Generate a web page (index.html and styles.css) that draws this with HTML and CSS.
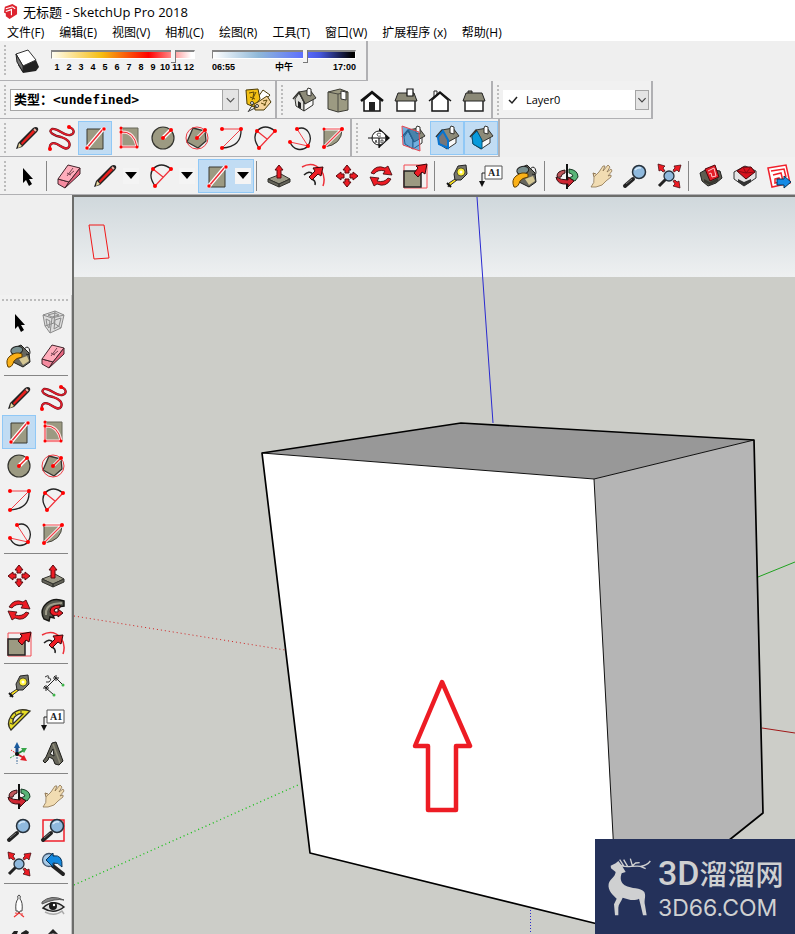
FILE: index.html
```html
<!DOCTYPE html>
<html lang="zh-CN">
<head>
<meta charset="utf-8">
<title>无标题 - SketchUp Pro 2018</title>
<link rel="stylesheet" href="styles.css">
</head>
<body>
<svg class="sprite" aria-hidden="true">
  <defs>
    <g id="house-iso" stroke="#33332f" stroke-width="1" stroke-linejoin="round">
      <path d="M-9 -1L-5 -7L0 2V11L-8 6Z" fill="#dcdcd8"/>
      <path d="M0 3L9 -1V5L0 11Z" fill="#f8f8f8"/><path d="M-5 -8L6 -10L12 -2L1 4Z" fill="#8d8b79"/>
      <path d="M-11 -1L-5 -8L1 4" fill="none" stroke-width="1.500"/>
      <path d="M3 -10V-5L7 -4V-11L4 -12Z" fill="#fff"/>
    </g>
    <g id="lens"><path d="M-2 3L-10 10" stroke="#222" stroke-width="4" stroke-linecap="round"/><path d="M-3 3L-9 8" stroke="#777" stroke-width="1"/><circle cx="4" cy="-4" r="6.500" fill="#8fb9dd" stroke="#26313b" stroke-width="1.500"/><path d="M0 -6Q2 -9 6 -8" stroke="#d5e9f8" stroke-width="1.500" fill="none"/></g>
    <path id="up-head" d="M0 -11L4 -6H2V-3H-2V-6H-4Z" fill="#ed1c24" stroke="#5a0a0f"/>
    <path id="ne-arrow" d="M11 -12L9 -2L6 -4L0 2L-4 -2L2 -8L0 -11Z" fill="#ed1c24" stroke="#3a0508"/>
  </defs>
  <symbol id="i-logo" viewBox="0 0 16 16"><path d="M2 3L10 0L15 3V11L7 16L3 13V10L1 9Z" fill="#dd2530"/><path d="M3 5L10 3L13 5M3 8L9 6V12" fill="none" stroke="#fff" stroke-width="1.200"/></symbol>
  <symbol id="i-shadow" viewBox="-14 -14 28 28"><path d="M-4 4L9 -1L12 6L9 10L-4 12L-9 4Z" fill="#222"/><path d="M-11 -7L1 -11L9 -1L-4 5Z" fill="#fff" stroke="#333" stroke-linejoin="round"/><path d="M-11 -7L-4 5L-4 11L-10 1Z" fill="#777" stroke="#222"/></symbol>
  <symbol id="i-tag" viewBox="-14 -14 28 28"><g stroke="#4b3a05" stroke-linejoin="round"><path d="M5 -10L12 -5L3 5L-2 0Z" fill="#fff"/><path d="M-12 -10L0 -11L2 -1L-4 7L-11 4Z" fill="#f2c014"/><path d="M0 2L9 -4L13 2L6 10L-3 10L-4 4Z" fill="#f6d59b"/></g><path d="M-9 -7L-4 -8L-5 -3M-2 -8L-6 0M-8 -3L-3 -1M5 1L9 0L6 6M3 3L8 5" stroke="#5e4908" fill="none"/><circle cx="-6" cy="3" r="1.500" fill="#fff" stroke="#333"/><circle cx="-1" cy="6" r="1.500" fill="#fff" stroke="#333"/><path d="M-5 4L-10 12M-1 7L-9 11" stroke="#333" fill="none"/></symbol>
  <symbol id="i-iso" viewBox="-14 -14 28 28"><use href="#house-iso"/><path d="M-6 1L-3 3V9L-6 7Z" fill="#222"/></symbol>
  <symbol id="i-top" viewBox="-14 -14 28 28"><path d="M-10 -8L2 -11L10 -8V10L0 12L-10 9Z" fill="#9c9a82" stroke="#3a3a33"/><path d="M0 -6V12M-10 -8L0 -6L10 -8" stroke="#4a4a42" fill="none"/><path d="M3 -9L8 -8V0L3 -1Z" fill="#fff" stroke="#333"/></symbol>
  <symbol id="i-front" viewBox="-14 -14 28 28"><path d="M-8 0V11H8V0L0 -7Z" fill="#fff" stroke="#111" stroke-width="1.500"/><path d="M-11 1L0 -8L11 1" stroke="#111" stroke-width="2.500" fill="none"/><path d="M-3 2H3V11H-3Z" fill="#222"/></symbol>
  <symbol id="i-right" viewBox="-14 -14 28 28"><path d="M-9 -1H9V11H-9Z" fill="#fff" stroke="#222" stroke-width="1.500"/><path d="M-8 -7H8L11 1H-11Z" fill="#8b8977" stroke="#222"/><path d="M1 -11H7V-4H1Z" fill="#fff" stroke="#111" stroke-width="1.200"/></symbol>
  <symbol id="i-back" viewBox="-14 -14 28 28"><path d="M-6 -3V-9H-3V-5" fill="#fff" stroke="#222"/><path d="M-8 0V11H8V0L0 -7Z" fill="#fff" stroke="#111" stroke-width="1.500"/><path d="M-11 1L0 -8L11 1" stroke="#111" stroke-width="1.500" fill="none"/></symbol>
  <symbol id="i-left" viewBox="-14 -14 28 28"><path d="M-9 0H9V11H-9Z" fill="#fff" stroke="#222" stroke-width="1.500"/><path d="M-6 -9H-2V-6H-6Z" fill="#8b8977" stroke="#222"/><path d="M-8 -7H8L11 1H-11Z" fill="#8b8977" stroke="#222"/></symbol>
  <symbol id="i-select" viewBox="-14 -14 28 28"><path d="M-4 -8V7L-1 4L2 10L5 8L2 3H6Z" fill="#000"/></symbol>
  <symbol id="i-component" viewBox="-14 -14 28 28"><g fill="none" stroke="#8b8b8b" stroke-linejoin="round"><path d="M-10 -7L2 -11L11 -7L8 6L-3 11L-8 4Z" fill="#ddd"/><path d="M-10 -7L-1 -4L11 -7M-1 -4L-3 11M-7 -3L-3 -1L-4 6L-6 3ZM2 -2L8 -4L6 4L1 7ZM-5 -7L2 -9L6 -7L-1 -5Z"/><path d="M-8 4L1 1L8 6M1 1L2 -11"/></g></symbol>
  <symbol id="i-paint" viewBox="-14 -14 28 28"><path d="M-7 -7L2 -11L10 -3L11 6L4 11L-6 6Z" fill="#66665e" stroke="#1d1d1a"/><ellipse cx="-1" cy="-6" rx="6" ry="4" transform="rotate(-12)" fill="#79908f" stroke="#222"/><path d="M0 3L8 0L10 5L4 9Z" fill="#d5c793"/><path d="M5 -7Q10 -12 11 -4Q11 0 7 -2" fill="none" stroke="#222"/><path d="M3 -2Q-3 -5 -9 0Q-14 4 -11 11Q-7 12 -5 5Q-3 2 3 1Z" fill="#fbb117" stroke="#634000"/></symbol>
  <symbol id="i-eraser" viewBox="-14 -14 28 28"><g stroke="#42242b" stroke-linejoin="round"><path d="M-11 3L0 6L-4 12L-11 8Z" fill="#f58ba0"/><path d="M-11 3L-1 -11L11 -8L0 6Z" fill="#ffadbb"/><path d="M0 6L11 -8V-2L-4 12Z" fill="#e56680"/></g><path d="M-2 0L4 -8M0 -1L5 -5M-2 -3L2 -1" stroke="#74434f"/></symbol>
  <symbol id="i-pencil" viewBox="-14 -14 28 28"><path d="M-11 11L-9 5L6 -10Q9 -12 11 -10Q12 -8 10 -6L-5 9Z" fill="#222"/><path d="M-6 5L6 -8L8 -6L-5 7Z" fill="#e8201d"/><path d="M-8 5L-5 8L-9 10Z" fill="#ead9a0"/><path d="M7 -9L9 -7" stroke="#f4b3a7" stroke-width="2"/></symbol>
  <symbol id="i-freehand" viewBox="-14 -14 28 28"><path d="M8 -11C14 -9 14 -4 9 -3C3 -2 -3 -10 -9 -9C-14 -6 -6 -2 0 -1C7 1 10 5 8 9C5 13 0 8 -4 6C-9 4 -12 6 -11 11" fill="none" stroke="#5b1118" stroke-width="2.300"/><path d="M8 -11C14 -9 14 -4 9 -3C3 -2 -3 -10 -9 -9C-14 -6 -6 -2 0 -1C7 1 10 5 8 9C5 13 0 8 -4 6C-9 4 -12 6 -11 11" fill="none" stroke="#e11c2a" stroke-width="1.500"/><circle cx="8" cy="-11" r="2" fill="#f00"/><circle cx="-11" cy="11" r="2" fill="#f00"/></symbol>
  <symbol id="i-rect" viewBox="-14 -14 28 28"><path d="M-8 -9H8V11H-8Z" fill="#9c9a82" stroke="#3a3a33"/><path d="M-8 10L8 -9" stroke="#fff" stroke-width="4"/><path d="M-8 10L8 -9" stroke="#ee2b35" stroke-width="1.500"/><circle cx="-8" cy="10" r="2" fill="#f00" stroke="#fff" stroke-width=".5"/><circle cx="9" cy="-9" r="2" fill="#f00" stroke="#fff" stroke-width=".5"/></symbol>
  <symbol id="i-rotrect" viewBox="-14 -14 28 28"><path d="M-7 -10H9V9H-7Z" fill="#9c9a82" stroke="#69685a"/><path d="M-8 -10V9H8M-8 -6Q5 -7 8 9" fill="none" stroke="#ffdede" stroke-width="3"/><path d="M-8 -10V9H8M-8 -6Q5 -7 8 9" fill="none" stroke="#ee2b35"/><g fill="#f00"><circle cx="-8" cy="-10" r="1.500"/><circle cx="-8" cy="-6" r="1.500"/><circle cx="-8" cy="9" r="1.500"/><circle cx="8" cy="9" r="1.500"/></g></symbol>
  <symbol id="i-circle" viewBox="-14 -14 28 28"><circle r="11" fill="#9c9a82" stroke="#33332e" stroke-width="1.200"/><path d="M0 0L8 -8" stroke="#fff" stroke-width="4"/><path d="M0 0L8 -8" stroke="#e22" stroke-width="1.500"/><circle r="2" fill="#f00"/><circle cx="8" cy="-8" r="2" fill="#f00"/></symbol>
  <symbol id="i-polygon" viewBox="-14 -14 28 28"><path d="M-4 -10L8 -7L9 3L1 10L-10 4Z" fill="#9c9a82" stroke="#33332e" stroke-width="1.300"/><circle r="11" fill="none" stroke="#ee3b43"/><path d="M0 0L8 -8" stroke="#fff" stroke-width="3"/><path d="M0 0L8 -8" stroke="#e22" stroke-width="1.500"/><circle r="2" fill="#f00"/><circle cx="8" cy="-8" r="2" fill="#f00"/></symbol>
  <symbol id="i-arc" viewBox="-14 -14 28 28"><path d="M10 -9Q11 9 -9 10" fill="none" stroke="#222" stroke-width="1.300"/><path d="M-9 -9H10L-9 10" fill="none" stroke="#f04048"/><g fill="#f00"><circle cx="-9" cy="-9" r="2"/><circle cx="10" cy="-9" r="2"/><circle cx="-9" cy="10" r="2"/></g></symbol>
  <symbol id="i-arc2" viewBox="-14 -14 28 28"><path d="M-6 10Q-13 0 -8 -7Q0 -15 10 -7" fill="none" stroke="#222" stroke-width="1.300"/><path d="M-6 10L10 -7M-8 -7L2 1" fill="none" stroke="#f02f38" stroke-width="1.200"/><g fill="#f00"><circle cx="-8" cy="-7" r="2"/><circle cx="10" cy="-7" r="2"/><circle cx="-6" cy="10" r="2"/></g></symbol>
  <symbol id="i-arc3" viewBox="-14 -14 28 28"><path d="M-2 -9C8 -13 15 -2 9 8C3 14 -6 12 -9 4" fill="none" stroke="#222" stroke-width="1.300"/><path d="M-2 -9L9 8L-9 4" fill="none" stroke="#f04048"/><g fill="#f00"><circle cx="-2" cy="-9" r="2"/><circle cx="9" cy="8" r="2"/><circle cx="-9" cy="4" r="2"/></g></symbol>
  <symbol id="i-pie" viewBox="-14 -14 28 28"><path d="M-9 -9H9Q9 7 -9 9Z" fill="#9c9a82" stroke="#44443b"/><path d="M-9 9L9 -9H-9" fill="none" stroke="#fff" stroke-width="3"/><path d="M-9 9L9 -9H-9" fill="none" stroke="#f04048" stroke-width="1.200"/><g fill="#f00"><circle cx="-9" cy="-9" r="1.500"/><circle cx="9" cy="-9" r="2"/><circle cx="-9" cy="9" r="2"/></g></symbol>
  <symbol id="i-section" viewBox="-14 -14 28 28"><path d="M0 -10L11 0L0 10Z" fill="#111"/><circle r="7" fill="#fff" stroke="#111"/><path d="M-11 0H10M0 0V10" stroke="#111" stroke-width="1.200"/><path d="M2 -4Q-2 -6 -2 -3Q-1 -1 2 -2M-4 5L-3 2L-2 5M2 2V5H4V2H2" fill="none" stroke="#333" stroke-width=".8"/></symbol>
  <symbol id="i-secplane" viewBox="-14 -14 28 28"><use href="#house-iso"/><path d="M-11 -12L6 -6L7 13L-10 7Z" fill="#1a7ecf" fill-opacity=".6" stroke="#eb4751"/></symbol>
  <symbol id="i-seccut" viewBox="-14 -14 28 28"><use href="#house-iso"/><path d="M-9 -1L-4 -7L1 2V10L-8 6Z" fill="#77777a" stroke="#0875d1" stroke-width="2"/></symbol>
  <symbol id="i-secfill" viewBox="-14 -14 28 28"><use href="#house-iso"/><path d="M-9 -2L-4 -7L1 2V11L-8 6Z" fill="#089bdc" stroke="#04547a"/></symbol>
  <symbol id="i-push" viewBox="-14 -14 28 28"><path d="M-11 3L2 -2L11 3L0 8Z" fill="#9a9885" stroke="#33332e"/><path d="M-11 3L0 8V11L-11 6ZM0 8L11 3V6L0 11Z" fill="#65645a" stroke="#33332e"/><path d="M0 -11L4 -6H2V2H-2V-6H-4Z" fill="#ed1c24" stroke="#5a0a0f"/></symbol>
  <symbol id="i-offset" viewBox="-14 -14 28 28"><path d="M-11 -9Q0 -15 8 -6Q13 1 10 10" fill="none" stroke="#ee3039" stroke-width="1.500"/><path d="M-9 -1Q-4 -6 0 -2M-2 3Q3 4 2 9" fill="none" stroke="#222" stroke-width="1.500"/><path d="M10 -9L8 0L5 -2L-1 4L-4 1L2 -5L0 -8Z" fill="#ed1c24" stroke="#3a0508"/></symbol>
  <symbol id="i-move" viewBox="-14 -14 28 28"><use href="#up-head"/><use href="#up-head" transform="rotate(90)"/><use href="#up-head" transform="rotate(180)"/><use href="#up-head" transform="rotate(270)"/></symbol>
  <symbol id="i-rotate" viewBox="-14 -14 28 28"><path id="rot-half" d="M-10 -3Q-5 -12 4 -8L7 -10L11 -1L2 -2L4 -5Q-3 -7 -7 -2Z" fill="#ed1c24" stroke="#3a0508" stroke-width=".8"/><use href="#rot-half" transform="rotate(180)"/></symbol>
  <symbol id="i-scale" viewBox="-14 -14 28 28"><path d="M-11 -11H12V12H-11Z" fill="none" stroke="#f34b53"/><path d="M-11 -5H6V11H-11Z" fill="#9c9a82" stroke="#222" stroke-width="1.500"/><path d="M12 -12L10 -2L7 -4L3 1L-1 -3L3 -8L1 -10Z" fill="#ed1c24" stroke="#3a0508"/></symbol>
  <symbol id="i-follow" viewBox="-14 -14 28 28"><path d="M11 -9Q1 -13 -6 -7Q-14 0 -9 9L-4 11L-3 7L1 8Q-2 0 4 -3L11 -4Z" fill="#56564c" stroke="#171714" stroke-width="1.500"/><path d="M-7 5Q-8 -4 1 -6L9 -7" fill="none" stroke="#9d9b89" stroke-width="2"/><path d="M7 -5Q-3 -5 -3 2Q-1 7 5 5V7L10 3L5 -1V2Q1 3 1 0Q2 -2 7 -2Z" fill="#ed1c24" stroke="#3a0508"/></symbol>
  <symbol id="i-tape" viewBox="-14 -14 28 28"><path d="M0 4L-9 11L-8 7L-2 3" fill="#ffe51a" stroke="#333"/><path d="M-3 -2L1 -10L9 -11L10 -2L4 4L-2 4Z" fill="#77776f" stroke="#222"/><circle cx="4" cy="-4" r="4" fill="#fff13a" stroke="#222" stroke-width=".7"/><path d="M-10 7L-6 11" stroke="#111" stroke-width="2"/><circle cx="4" cy="-4" r="1.500" fill="#fff"/></symbol>
  <symbol id="i-text" viewBox="-14 -14 28 28"><path d="M-6 -10H11V3H-6Z" fill="#fff" stroke="#555"/><text x="-3" y="0" class="glyph">A1</text><path d="M-6 -3H-9V6" fill="none" stroke="#222"/><path d="M-12 5H-6L-9 11Z" fill="#111"/></symbol>
  <symbol id="i-dim" viewBox="-14 -14 28 28"><path d="M-7 2L3 -8M-7 2L1 9M3 -8L10 -1M-10 2H-4M-7 -1V5M-9 0L-5 4M0 -8H6M3 -11V-5M1 -10L5 -6" stroke="#222" fill="none"/><path d="M-8 -9Q-3 -12 -5 -8Q0 -8 -4 -4L-7 -4" stroke="#333" fill="none"/><circle cx="1" cy="9" r="1.500" fill="#3eb54a"/><circle cx="10" cy="-1" r="1.500" fill="#3eb54a"/></symbol>
  <symbol id="i-protractor" viewBox="-14 -14 28 28"><path d="M-8 10L11 -9Q-2 -13 -8 -4Q-13 4 -8 10ZM-6 4Q-7 -2 -2 -5Q1 -7 4 -6Z" fill="#e7dc25" fill-rule="evenodd" stroke="#333122" stroke-width="1.300"/><path d="M-9 3L-7 4M-8 -2L-6 -1M-4 -7L-3 -5M2 -9L2 -7" stroke="#333"/></symbol>
  <symbol id="i-axes" viewBox="-14 -14 28 28"><path d="M-2 0V-7" stroke="#1a4b84" stroke-width="3"/><path d="M-5 -6L-2 -12L1 -6Z" fill="#1a5b9e"/><path d="M-2 0L5 -4" stroke="#278a38" stroke-width="2"/><path d="M2 -6L8 -6L5 -1Z" fill="#38a64a"/><path d="M-2 0L5 4" stroke="#d31f27" stroke-width="2"/><path d="M5 1L8 7L1 6Z" fill="#e11c25"/><path d="M-2 0V10" stroke="#45719d" stroke-dasharray="2 1"/><path d="M-2 0L-8 -4" stroke="#e33" stroke-dasharray="2 1"/><path d="M-2 0L-9 4" stroke="#3a4" stroke-dasharray="2 1"/><circle cx="-2" cy="0" r="2" fill="#111"/></symbol>
  <symbol id="i-text3d" viewBox="-14 -14 28 28"><path d="M-7 3L-1 -11L3 -12L10 7L6 11L2 10L0 5L-4 3L-5 6L-8 9L-10 7ZM-3 0L1 2L0 -5Z" fill="#66655a" stroke="#1d1d19" fill-rule="evenodd"/><path d="M0 -10L7 9" fill="none" stroke="#8f8d7a" stroke-width="1.500"/></symbol>
  <symbol id="i-orbit" viewBox="-14 -14 28 28"><path d="M0 -12V13" stroke="#111" stroke-width="2"/><path d="M-2 -6Q-10 -5 -10 0Q-9 2 -6 1Q-6 -2 -2 -3Z" fill="#bf5459" stroke="#381214"/><path d="M2 -7Q11 -6 11 1L8 5L2 2L6 0Q5 -3 2 -3Z" fill="#59b477" stroke="#173b24"/><path d="M-11 1Q-10 9 1 8V11L7 5L1 1V4Q-6 4 -11 1Z" fill="#cf2632" stroke="#330c0f"/></symbol>
  <symbol id="i-hand" viewBox="-14 -14 28 28"><path d="M-10 11Q-6 7 -7 1L-2 -4L2 -10L4 -10L2 -5L7 -11L9 -9L6 -4L10 -7L11 -5L7 0L10 -1L10 1L5 5Q2 10 -5 11Z" fill="#f1dcb2" stroke="#8c7350" stroke-width=".8" stroke-linejoin="round"/><path d="M-7 1L-8 -3L-5 -2" fill="#f1dcb2" stroke="#8c7350"/></symbol>
  <symbol id="i-zoom" viewBox="-14 -14 28 28"><use href="#lens"/></symbol>
  <symbol id="i-zoomwin" viewBox="-14 -14 28 28"><path d="M-10 -10H11V11H-10Z" fill="none" stroke="#f0212b" stroke-width="1.500"/><use href="#lens"/></symbol>
  <symbol id="i-zoomext" viewBox="-14 -14 28 28"><path d="M-3 3L-10 10" stroke="#222" stroke-width="3"/><circle r="5" fill="#8fb9dd" stroke="#26313b" stroke-width="1.300"/><g fill="#ed1c24" stroke="#3a0508" stroke-width=".7"><path id="ne-small" d="M12 -11L10 -4L8 -6L5 -4L4 -6L6 -8L5 -10Z"/><use href="#ne-small" transform="rotate(90)"/><use href="#ne-small" transform="rotate(270)"/></g></symbol>
  <symbol id="i-prev" viewBox="-14 -14 28 28"><circle cx="-4" cy="-4" r="6.500" fill="#a6c9e6" stroke="#40546b" stroke-width="1.300"/><path d="M0 2L10 10" stroke="#222" stroke-width="4" stroke-linecap="round"/><path d="M-7 -4L0 -11V-8Q10 -10 9 3Q5 -2 0 -1V3Z" fill="#1288df" stroke="#0c365a"/></symbol>
  <symbol id="i-position" viewBox="-14 -14 28 28"><path d="M0 -11Q2 -11 1 -7Q4 -4 3 5L1 5L0 8L-1 5H-3Q-4 -4 -1 -7Q-2 -11 0 -11Z" fill="#fff" stroke="#444"/><path d="M-5 11L0 7L5 11M-4 7L4 8" fill="none" stroke="#e33" stroke-width="1.200"/></symbol>
  <symbol id="i-look" viewBox="-14 -14 28 28"><path d="M-11 -4Q-2 -12 11 -6Q2 -8 -11 -2Z" fill="#888" stroke="#555"/><path d="M-10 2Q0 -8 11 1Q1 9 -10 2Z" fill="#ddd" stroke="#222" stroke-width="1.500"/><circle cx="0" cy="0" r="4" fill="#1a1a1a"/><circle cx="1" cy="-1" r="1.200" fill="#fff"/><path d="M-8 6Q2 11 9 5L11 8" fill="none" stroke="#aaa" stroke-width="1.500"/></symbol>
  <symbol id="i-walk" viewBox="-14 -14 28 28"><path d="M-9 -4L-5 -9L-1 -9L-3 -3L-8 3ZM2 -7L7 -10L10 -8L8 -3L3 2Z" fill="#222"/></symbol>
  <symbol id="i-sectool" viewBox="-14 -14 28 28"><path d="M-9 -2L0 -11L9 -2Z" fill="#222"/><circle r="7" fill="#fff" stroke="#222"/></symbol>
  <symbol id="i-warehouse" viewBox="-14 -14 28 28"><path d="M-11 -3L-4 -7L9 -5L11 2L5 7L-3 10L-9 5Z" fill="#5d5d51" stroke="#222"/><path d="M-6 -7L4 -11L8 1L-1 5Z" fill="#e31c27" stroke="#4c080d"/><path d="M-3 -5L3 -8L5 0L1 1L0 -3L-2 -2" fill="none" stroke="#ffc9cc"/><path d="M-7 3L-1 6L7 2V5L-1 9L-7 6Z" fill="#373730"/></symbol>
  <symbol id="i-extension" viewBox="-14 -14 28 28"><path d="M-11 -4L0 -10L11 -5L11 2L-1 10L-11 3Z" fill="#e4e4e4" stroke="#333"/><path d="M-8 -5L-2 -9L6 -9L10 -4L1 3Z" fill="#d8121d" stroke="#46050a"/><path d="M-8 -5L1 -3L10 -4M-2 -9L1 -3L6 -9" fill="none" stroke="#8c0b13"/><path d="M-7 3L-1 6L6 3V6L-1 10L-7 6Z" fill="#333"/></symbol>
  <symbol id="i-layout" viewBox="-14 -14 28 28"><path d="M-11 -8L7 -11L11 7L-7 11Z" fill="#fff" stroke="#f0202b" stroke-width="1.500"/><path d="M-8 -5L5 -7L7 1M-6 -1L2 -3L4 5M-4 3L0 2L1 6L-4 7Z" fill="none" stroke="#f0202b" stroke-width="1.500"/><path d="M-2 3H5V0L12 6L5 12V9H-2Z" fill="#158be6" stroke="#073459"/></symbol>
</svg>

<header class="window-head">
  <h1 class="title"><svg class="title-logo" aria-hidden="true"><use href="#i-logo"/></svg>无标题 - SketchUp Pro 2018</h1>
  <nav class="menu">
    <a href="#">文件(F)</a><a href="#">编辑(E)</a><a href="#">视图(V)</a><a href="#">相机(C)</a><a href="#">绘图(R)</a><a href="#">工具(T)</a><a href="#">窗口(W)</a><a href="#">扩展程序 (x)</a><a href="#">帮助(H)</a>
  </nav>
</header>

<div class="toolbars">
  <div class="row row-first">
    <div class="bar">
      <i class="grip"></i>
      <button class="tool" aria-label="阴影"><svg class="icon"><use href="#i-shadow"/></svg></button>
      <div class="slider">
        <input class="range range-date" type="range" min="0" max="100" value="87" aria-label="日期">
        <div class="months"><span>1</span><span>2</span><span>3</span><span>4</span><span>5</span><span>6</span><span>7</span><span>8</span><span>9</span><span>10</span><span>11</span><span>12</span></div>
      </div>
      <div class="slider">
        <input class="range range-time" type="range" min="0" max="100" value="66" aria-label="时间">
        <div class="times"><span>06:55</span><span>中午</span><span>17:00</span></div>
      </div>
    </div>
  </div>

  <div class="row">
    <div class="bar">
      <i class="grip"></i>
      <div class="combo combo-type">
        <select aria-label="类型"><option>类型：&lt;undefined&gt;</option></select>
        <svg class="chevron" viewBox="0 0 16 20" aria-hidden="true"><path d="M4 8L8 12L12 8" fill="none" stroke="#555" stroke-width="1.300"/></svg>
      </div>
      <button class="tool" aria-label="标签"><svg class="icon"><use href="#i-tag"/></svg></button>
    </div>
    <div class="bar">
      <i class="grip"></i>
      <button class="tool" aria-label="等轴"><svg class="icon"><use href="#i-iso"/></svg></button>
      <button class="tool" aria-label="俯视"><svg class="icon"><use href="#i-top"/></svg></button>
      <button class="tool" aria-label="前视"><svg class="icon"><use href="#i-front"/></svg></button>
      <button class="tool" aria-label="右视"><svg class="icon"><use href="#i-right"/></svg></button>
      <button class="tool" aria-label="后视"><svg class="icon"><use href="#i-back"/></svg></button>
      <button class="tool" aria-label="左视"><svg class="icon"><use href="#i-left"/></svg></button>
    </div>
    <div class="bar">
      <i class="grip"></i>
      <div class="combo combo-layer">
        <svg class="check" viewBox="0 0 10 10" aria-hidden="true"><path d="M1 5L4 8L9 2" fill="none" stroke="#222" stroke-width="1.500"/></svg>
        <select aria-label="图层"><option>Layer0</option></select>
        <svg class="chevron" viewBox="0 0 12 20" aria-hidden="true"><path d="M2 8L6 12L10 8" fill="none" stroke="#444" stroke-width="1.300"/></svg>
      </div>
    </div>
  </div>

  <div class="row">
    <div class="bar">
      <i class="grip"></i>
      <button class="tool" aria-label="直线"><svg class="icon"><use href="#i-pencil"/></svg></button>
      <button class="tool" aria-label="手绘线"><svg class="icon"><use href="#i-freehand"/></svg></button>
      <button class="tool active" aria-label="矩形"><svg class="icon"><use href="#i-rect"/></svg></button>
      <button class="tool" aria-label="旋转长方形"><svg class="icon"><use href="#i-rotrect"/></svg></button>
      <button class="tool" aria-label="圆"><svg class="icon"><use href="#i-circle"/></svg></button>
      <button class="tool" aria-label="多边形"><svg class="icon"><use href="#i-polygon"/></svg></button>
      <button class="tool" aria-label="圆弧"><svg class="icon"><use href="#i-arc"/></svg></button>
      <button class="tool" aria-label="两点圆弧"><svg class="icon"><use href="#i-arc2"/></svg></button>
      <button class="tool" aria-label="三点圆弧"><svg class="icon"><use href="#i-arc3"/></svg></button>
      <button class="tool" aria-label="扇形"><svg class="icon"><use href="#i-pie"/></svg></button>
    </div>
    <div class="bar">
      <i class="grip"></i>
      <button class="tool" aria-label="剖切面"><svg class="icon"><use href="#i-section"/></svg></button>
      <button class="tool" aria-label="显示剖切面"><svg class="icon"><use href="#i-secplane"/></svg></button>
      <button class="tool active" aria-label="显示剖面切割"><svg class="icon"><use href="#i-seccut"/></svg></button>
      <button class="tool active" aria-label="显示剖面填充"><svg class="icon"><use href="#i-secfill"/></svg></button>
    </div>
  </div>

  <div class="row row-last">
    <div class="bar">
      <i class="grip"></i>
      <button class="tool" aria-label="选择"><svg class="icon"><use href="#i-select"/></svg></button>
      <i class="sep"></i>
      <button class="tool" aria-label="擦除"><svg class="icon"><use href="#i-eraser"/></svg></button>
      <button class="tool split" aria-label="直线"><svg class="icon"><use href="#i-pencil"/></svg><span class="drop"></span></button>
      <button class="tool split" aria-label="圆弧"><svg class="icon"><use href="#i-arc2"/></svg><span class="drop"></span></button>
      <button class="tool split active" aria-label="矩形"><svg class="icon"><use href="#i-rect"/></svg><span class="drop"></span></button>
      <i class="sep"></i>
      <button class="tool" aria-label="推拉"><svg class="icon"><use href="#i-push"/></svg></button>
      <button class="tool" aria-label="偏移"><svg class="icon"><use href="#i-offset"/></svg></button>
      <button class="tool" aria-label="移动"><svg class="icon"><use href="#i-move"/></svg></button>
      <button class="tool" aria-label="旋转"><svg class="icon"><use href="#i-rotate"/></svg></button>
      <button class="tool" aria-label="缩放"><svg class="icon"><use href="#i-scale"/></svg></button>
      <i class="sep"></i>
      <button class="tool" aria-label="卷尺"><svg class="icon"><use href="#i-tape"/></svg></button>
      <button class="tool" aria-label="文字"><svg class="icon"><use href="#i-text"/></svg></button>
      <button class="tool" aria-label="材质"><svg class="icon"><use href="#i-paint"/></svg></button>
      <i class="sep"></i>
      <button class="tool" aria-label="环绕观察"><svg class="icon"><use href="#i-orbit"/></svg></button>
      <button class="tool" aria-label="平移"><svg class="icon"><use href="#i-hand"/></svg></button>
      <button class="tool" aria-label="视图缩放"><svg class="icon"><use href="#i-zoom"/></svg></button>
      <button class="tool" aria-label="充满视窗"><svg class="icon"><use href="#i-zoomext"/></svg></button>
      <i class="sep"></i>
      <button class="tool" aria-label="模型库"><svg class="icon"><use href="#i-warehouse"/></svg></button>
      <button class="tool" aria-label="扩展程序库"><svg class="icon"><use href="#i-extension"/></svg></button>
      <button class="tool" aria-label="布局"><svg class="icon"><use href="#i-layout"/></svg></button>
    </div>
  </div>
</div>

<main class="work">
  <aside class="side">
    <div class="palette">
      <i class="grip-h"></i>
      <div class="group">
        <button class="tool" aria-label="选择"><svg class="icon"><use href="#i-select"/></svg></button>
        <button class="tool" aria-label="制作组件"><svg class="icon"><use href="#i-component"/></svg></button>
        <button class="tool" aria-label="材质"><svg class="icon"><use href="#i-paint"/></svg></button>
        <button class="tool" aria-label="擦除"><svg class="icon"><use href="#i-eraser"/></svg></button>
      </div>
      <div class="group">
        <button class="tool" aria-label="直线"><svg class="icon"><use href="#i-pencil"/></svg></button>
        <button class="tool" aria-label="手绘线"><svg class="icon"><use href="#i-freehand"/></svg></button>
        <button class="tool active" aria-label="矩形"><svg class="icon"><use href="#i-rect"/></svg></button>
        <button class="tool" aria-label="旋转长方形"><svg class="icon"><use href="#i-rotrect"/></svg></button>
        <button class="tool" aria-label="圆"><svg class="icon"><use href="#i-circle"/></svg></button>
        <button class="tool" aria-label="多边形"><svg class="icon"><use href="#i-polygon"/></svg></button>
        <button class="tool" aria-label="圆弧"><svg class="icon"><use href="#i-arc"/></svg></button>
        <button class="tool" aria-label="两点圆弧"><svg class="icon"><use href="#i-arc2"/></svg></button>
        <button class="tool" aria-label="三点圆弧"><svg class="icon"><use href="#i-arc3"/></svg></button>
        <button class="tool" aria-label="扇形"><svg class="icon"><use href="#i-pie"/></svg></button>
      </div>
      <div class="group">
        <button class="tool" aria-label="移动"><svg class="icon"><use href="#i-move"/></svg></button>
        <button class="tool" aria-label="推拉"><svg class="icon"><use href="#i-push"/></svg></button>
        <button class="tool" aria-label="旋转"><svg class="icon"><use href="#i-rotate"/></svg></button>
        <button class="tool" aria-label="路径跟随"><svg class="icon"><use href="#i-follow"/></svg></button>
        <button class="tool" aria-label="缩放"><svg class="icon"><use href="#i-scale"/></svg></button>
        <button class="tool" aria-label="偏移"><svg class="icon"><use href="#i-offset"/></svg></button>
      </div>
      <div class="group">
        <button class="tool" aria-label="卷尺"><svg class="icon"><use href="#i-tape"/></svg></button>
        <button class="tool" aria-label="尺寸"><svg class="icon"><use href="#i-dim"/></svg></button>
        <button class="tool" aria-label="量角器"><svg class="icon"><use href="#i-protractor"/></svg></button>
        <button class="tool" aria-label="文字"><svg class="icon"><use href="#i-text"/></svg></button>
        <button class="tool" aria-label="轴"><svg class="icon"><use href="#i-axes"/></svg></button>
        <button class="tool" aria-label="三维文字"><svg class="icon"><use href="#i-text3d"/></svg></button>
      </div>
      <div class="group">
        <button class="tool" aria-label="环绕观察"><svg class="icon"><use href="#i-orbit"/></svg></button>
        <button class="tool" aria-label="平移"><svg class="icon"><use href="#i-hand"/></svg></button>
        <button class="tool" aria-label="视图缩放"><svg class="icon"><use href="#i-zoom"/></svg></button>
        <button class="tool" aria-label="缩放窗口"><svg class="icon"><use href="#i-zoomwin"/></svg></button>
        <button class="tool" aria-label="充满视窗"><svg class="icon"><use href="#i-zoomext"/></svg></button>
        <button class="tool" aria-label="上一个"><svg class="icon"><use href="#i-prev"/></svg></button>
      </div>
      <div class="group">
        <button class="tool" aria-label="定位相机"><svg class="icon"><use href="#i-position"/></svg></button>
        <button class="tool" aria-label="绕轴旋转"><svg class="icon"><use href="#i-look"/></svg></button>
        <button class="tool" aria-label="漫游"><svg class="icon"><use href="#i-walk"/></svg></button>
        <button class="tool" aria-label="剖切面"><svg class="icon"><use href="#i-sectool"/></svg></button>
      </div>
    </div>
  </aside>

  <section class="viewport">
    <svg class="scene" role="img" aria-label="立方体模型">
      <g transform="translate(-74 -197)" stroke-linejoin="round">
        <path d="M477 197L493 423" stroke="#2a2ad0"/>
        <path d="M758 577L795 562L1200 398" stroke="#1fa21f" fill="none"/>
        <path d="M762 728L795 733L1200 794" stroke="#a01818" fill="none"/>
        <path d="M74 616L285 650" stroke="#d02020" stroke-dasharray="1 3"/>
        <path d="M74 885L298 785" stroke="#10c010" stroke-width="1.300" stroke-dasharray="1 3"/>
        <path d="M530.500 907V940" stroke="#2a2ad0" stroke-dasharray="1 2"/>
        <path d="M262 453L461 423L754 440L594 479Z" fill="#989898"/>
        <path d="M262 453L594 479L618 929L310 853Z" fill="#fff"/>
        <path d="M594 479L754 440L763 813L618 929Z" fill="#b5b5b5"/>
        <path d="M262 453L594 479L754 440M594 479L618 929" fill="none" stroke="#111"/>
        <path d="M262 453L461 423L754 440L763 813L618 929L310 853Z" fill="none" stroke="#000" stroke-width="1.700"/>
        <path d="M89 225H104L109 258L94 259Z" fill="none" stroke="#f01818"/>
        <path d="M442 682L470 746H456V810H428V746H415Z" fill="none" stroke="#ed1c24" stroke-width="4.500"/>
      </g>
    </svg>
    <div class="brand">
      <svg class="deer" viewBox="50 80 135 180" aria-hidden="true"><path d="M61 106L76 99L84 92L94 105L106 125L94 129C89 142 90 156 103 165C125 177 150 171 162 185C168 200 160 207 164 225L169 255H158L151 225L146 205C130 214 112 206 97 202C93 213 84 222 84 232V255H74L71 222L79 205C70 195 51 181 55 160C59 146 74 141 76 125L62 114Z" fill="#cfd0d1"/><path d="M90 103C99 116 130 104 150 108Q170 106 180 92M101 108L88 88M112 108L100 88M126 106L120 85M126 106L136 98L148 97M150 108L166 115" fill="none" stroke="#cfd0d1" stroke-width="4"/></svg>
      <div class="brand-text"><strong><span class="brand-3d">3D</span>溜溜网</strong><span class="brand-url">3D66.COM</span></div>
    </div>
  </section>
</main>
</body>
</html>
```
FILE: styles.css
```css
* { box-sizing: border-box; }

body {
  margin: 0;
  height: 100vh;
  overflow: hidden;
  display: flex;
  flex-direction: column;
  background: #efefef;
  color: #000;
  font-family: "Open Sans", "Noto Sans CJK SC", sans-serif;
  font-size: 12px;
}

.sprite { position: absolute; width: 0; height: 0; }
.glyph { font: bold 10px "Liberation Serif", serif; fill: #222; }

.window-head { background: #fff; }

.title {
  display: flex;
  align-items: center;
  gap: 5px;
  height: 23px;
  margin: 0;
  padding-left: 3px;
  font-size: 13px;
  line-height: 20px;
  font-weight: 400;
}
.title-logo { width: 15px; height: 15px; }

.menu {
  display: flex;
  gap: 15px;
  height: 18px;
  padding-left: 7px;
  line-height: 20px;
  white-space: nowrap;
}
.menu a { color: inherit; text-decoration: none; }

.toolbars { flex: none; }

.row { display: flex; height: 38px; }
.row-first { height: 40px; }

.bar {
  display: flex;
  flex: none;
  align-items: center;
  background: #f1f1f1;
  border: solid #b0b0b3;
  border-width: 0 2px 1px 0;
}
.row-last .bar { flex: 1 0 auto; border-right: 0; }

.grip {
  align-self: stretch;
  width: 2px;
  margin: 4px 4px 3px;
  background: repeating-linear-gradient(#bcbcbc 0 2px, transparent 2px 4px);
}

.tool {
  display: flex;
  flex: none;
  align-items: center;
  justify-content: center;
  width: 34px;
  height: 34px;
  padding: 0;
  border: 1px solid transparent;
  background: none;
}
.tool.active { background: #c1dcf3; border-color: #90c8f6; }
.icon { flex: none; width: 28px; height: 28px; }

.split {
  justify-content: flex-start;
  gap: 4px;
  width: 56px;
  padding-left: 4px;
}
.drop {
  display: flex;
  align-items: center;
  justify-content: center;
  width: 16px;
  height: 16px;
  background: #f4f4f4;
}
.drop::before {
  content: "";
  border: solid transparent;
  border-width: 7px 6px 0;
  border-top-color: #000;
}

.sep {
  width: 1px;
  height: 30px;
  margin: 0 5px 0 2px;
  background: #858585;
}

.slider { width: 144px; margin: 0 10px 0 7px; }
.range {
  display: block;
  appearance: none;
  width: 100%;
  height: 13px;
  margin: 0;
  background: none;
}
.range::-webkit-slider-runnable-track {
  height: 9px;
  border: solid;
  border-width: 2px 1px 1px;
  border-color: #858585 #fff #fff #858585;
}
.range-date::-webkit-slider-runnable-track { background: linear-gradient(90deg, #fffdf0, #f5bd12 35%, #f00 68%, #fff 98%); }
.range-time::-webkit-slider-runnable-track { background: linear-gradient(90deg, #fff, #8fb8d8 32%, #5a6cff 65%, #4658e0 75%, #000 98%); }
.range::-webkit-slider-thumb {
  appearance: none;
  width: 5px;
  height: 13px;
  margin-top: -2px;
  background: #f4f4f4;
  border: solid;
  border-width: 0 1px 1px 0;
  border-color: #777;
}
.months, .times { font: bold 9px/12px "Liberation Sans", "Noto Sans CJK SC", sans-serif; }
.months { display: grid; grid-template-columns: repeat(12, 1fr); text-align: center; }
.times { display: flex; justify-content: space-between; }

.combo { position: relative; background: #fff; }
.combo select {
  appearance: none;
  display: block;
  width: 100%;
  height: 100%;
  padding: 0 20px 0 3px;
  border: 0;
  border-radius: 0;
  background: none;
  color: #000;
}
.combo-type { width: 229px; height: 22px; margin-right: 2px; border: 1px solid #a5a5a5; }
.combo-type select { font: bold 13px "DejaVu Sans Mono", "Noto Sans CJK SC", monospace; }
.combo-layer { display: flex; align-items: center; width: 146px; height: 20px; margin-right: 2px; padding-left: 5px; }
.combo-layer select { padding-left: 8px; font: 11px "Open Sans", sans-serif; }
.check { flex: none; width: 10px; height: 10px; }
.chevron {
  position: absolute;
  top: 0;
  right: 0;
  width: 16px;
  height: 100%;
  background: #e4e4e4;
  border: solid #a5a5a5;
  border-width: 0 0 0 1px;
  pointer-events: none;
}
.combo-layer .chevron { width: 14px; border-width: 1px; }

.work { display: flex; flex: 1; min-height: 0; }

.side { flex: none; width: 72px; padding-top: 100px; overflow: hidden; }
.palette {
  min-height: 100%;
  padding-top: 4px;
  background: #f1f1f1;
  border-right: 1px solid #c4c4c4;
}
.grip-h {
  display: block;
  height: 2px;
  margin: 0 2px 4px;
  background: repeating-linear-gradient(90deg, #bcbcbc 0 2px, transparent 2px 4px);
}
.group {
  display: grid;
  grid-template-columns: 34px 34px;
  position: relative;
  padding-left: 2px;
}
.group + .group { padding-top: 8px; }
.group + .group::before {
  content: "";
  position: absolute;
  top: 2px;
  left: 4px;
  right: 3px;
  height: 1px;
  background: #858585;
}

.viewport {
  position: relative;
  flex: 1;
  min-width: 0;
  border: solid #6c6d6b;
  border-width: 2px 0 0 2px;
  background: linear-gradient(#d0d8dc, #eef0f1) top / 100% 80px no-repeat #cccdc8;
}
.scene { display: block; width: 100%; height: 100%; }

.brand {
  position: absolute;
  right: 0;
  bottom: 0;
  display: flex;
  align-items: center;
  gap: 6px;
  width: 200px;
  height: 95px;
  padding-left: 12px;
  background: #24315a;
  color: #cfd0d1;
  white-space: nowrap;
}
.deer { flex: none; width: 45px; height: 60px; }
.brand-text { display: flex; flex-direction: column; }
.brand strong { font: 500 28px/42px "Noto Sans CJK SC", sans-serif; }
.brand-3d { font: 500 34px/42px Roboto, sans-serif; }
.brand-url { font: 400 23px/28px Inter, sans-serif; }
```
